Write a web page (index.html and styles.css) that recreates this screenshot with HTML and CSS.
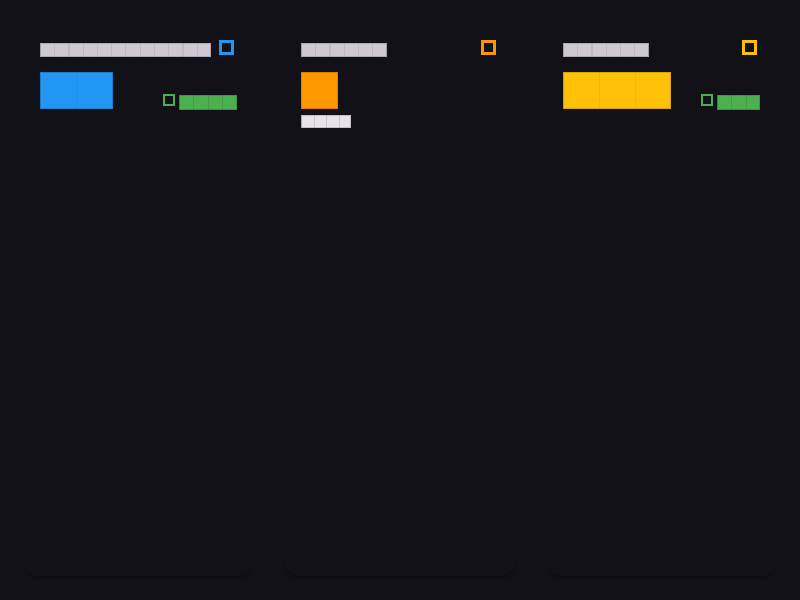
FILE: index.html
```html
<!DOCTYPE html>
<html lang="en">
<head>
<meta charset="utf-8">
<title>Stats</title>
<link rel="stylesheet" href="styles.css">
</head>
<body>
<main class="grid">
  <section class="card">
    <div class="head">
      <span class="glyphs title n12"></span>
      <span class="icon icon-blue"></span>
    </div>
    <div class="row">
      <span class="glyphs value v2 blue"></span>
      <div class="delta">
        <span class="delta-icon"></span>
        <span class="glyphs small g4"></span>
      </div>
    </div>
  </section>
  <section class="card">
    <div class="head">
      <span class="glyphs title n6"></span>
      <span class="icon icon-orange"></span>
    </div>
    <div class="row">
      <span class="glyphs value v1 orange"></span>
    </div>
    <span class="glyphs sub s4"></span>
  </section>
  <section class="card">
    <div class="head">
      <span class="glyphs title n6"></span>
      <span class="icon icon-yellow"></span>
    </div>
    <div class="row">
      <span class="glyphs value v3 yellow"></span>
      <div class="delta">
        <span class="delta-icon"></span>
        <span class="glyphs small g3"></span>
      </div>
    </div>
  </section>
</main>
</body>
</html>
```
FILE: styles.css
```css
* { box-sizing: border-box; }
html, body { margin: 0; height: 100%; }
html { background: #131118; }
body {
  background: #131118;
  font-family: "Inter", "Liberation Sans", sans-serif;
}
.grid {
  display: grid;
  grid-template-columns: repeat(3, 1fr);
  gap: 32px;
  padding: 24px;
  height: 600px;
}
.card {
  background: #131118;
  border-radius: 14px;
  box-shadow: 0 3px 3px -1px rgba(0, 0, 0, 0.3);
  padding: 16px;
  display: flex;
  flex-direction: column;
}
.head {
  display: flex;
  justify-content: space-between;
  align-items: flex-start;
  height: 17px;
}
.glyphs {
  display: block;
  box-shadow: inset 0 0 0 1px rgba(0, 0, 0, 0.15);
}
.title {
  margin-top: 3px;
  height: 14px;
  background: repeating-linear-gradient(to right, rgba(0,0,0,0.07) 0 1px, transparent 1px 14.25px), #cdc8d2;
}
.n12 { width: 171px; }
.n6 { width: 86px; }
.icon {
  width: 15px;
  height: 15px;
  border: 3px solid;
  margin-right: 3px;
}
.icon-blue { border-color: #2196f3; }
.icon-orange { border-color: #ff9800; }
.icon-yellow { border-color: #ffc107; }
.row {
  margin-top: 15px;
  display: flex;
  justify-content: space-between;
  align-items: flex-end;
}
.value { height: 37px; }
.v1 { width: 37px; }
.v2 { width: 73px; }
.v3 { width: 108px; }
.blue { background: repeating-linear-gradient(to right, rgba(0,0,0,0.05) 0 1px, transparent 1px 36.5px), #2196f3; }
.orange { background: #ff9800; }
.yellow { background: repeating-linear-gradient(to right, rgba(0,0,0,0.05) 0 1px, transparent 1px 36px), #ffc107; }
.delta {
  display: flex;
  align-items: flex-start;
  gap: 4px;
  margin-bottom: -1px;
}
.delta-icon {
  width: 12px;
  height: 12px;
  border: 2px solid #4caf50;
}
.small {
  margin-top: 1px;
  height: 15px;
  background: repeating-linear-gradient(to right, rgba(0,0,0,0.1) 0 1px, transparent 1px 14.4px), #4caf50;
}
.g4 { width: 58px; }
.g3 { width: 43px; }
.sub {
  margin-top: 6px;
  height: 13px;
  width: 50px;
  background: repeating-linear-gradient(to right, rgba(0,0,0,0.12) 0 1px, transparent 1px 12.5px), #e6e1ea;
}
```
